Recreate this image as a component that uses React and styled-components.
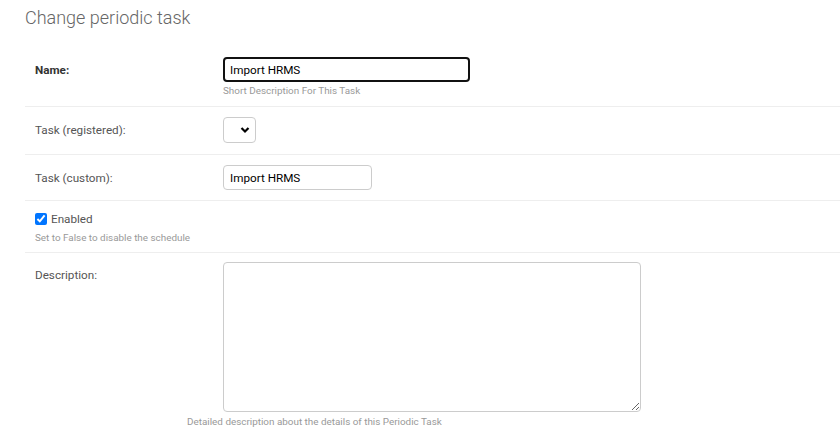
import React from "react";
import styled, { createGlobalStyle } from "styled-components";

const GlobalStyle = createGlobalStyle`
  body {
    margin: 0;
    background: #fff;
    font-family: Roboto, "Liberation Sans", sans-serif;
    font-size: 11.7px;
    color: #333;
  }
`;

const Page = styled.div`
  padding: 7px 0 0 25px;
`;

const Title = styled.h1`
  margin: 0 0 18px 0;
  font-size: 18px;
  font-weight: 300;
  line-height: 22px;
  color: #666;
`;

const Row = styled.div`
  padding: ${(p) => p.$pad || "10px 10px 10px 10px"};
  border-bottom: ${(p) => (p.$last ? "none" : "1px solid #eee")};
`;

const Line = styled.div`
  display: flex;
  align-items: ${(p) => (p.$top ? "flex-start" : "center")};
`;

const Label = styled.label`
  width: 188px;
  flex: none;
  font-weight: ${(p) => (p.$required ? "bold" : "normal")};
  color: ${(p) => (p.$required ? "#333" : "#555")};
  padding-top: ${(p) => (p.$top ? "6px" : "0")};
`;

const TextInput = styled.input`
  box-sizing: border-box;
  width: ${(p) => p.$w}px;
  height: 25px;
  margin: 0;
  font-family: Roboto, "Liberation Sans", sans-serif;
  font-size: 11.7px;
  color: #000;
  border: ${(p) => (p.$focus ? "2px solid #111" : "1px solid #ccc")};
  border-radius: 4px;
  padding: 0 0 0 ${(p) => (p.$focus ? "5px" : "6px")};
  outline: none;
`;

const SelectBox = styled.div`
  box-sizing: border-box;
  width: 33px;
  height: 26px;
  border: 1px solid #ccc;
  border-radius: 4px;
  display: flex;
  align-items: center;
  justify-content: flex-end;
  padding-right: 5px;
`;

const Help = styled.div`
  font-size: 9.9px;
  line-height: 12px;
  color: #999;
  margin-top: ${(p) => p.$gap || 3}px;
  padding-left: ${(p) => p.$indent || 0}px;
`;

const CheckLine = styled.label`
  display: flex;
  align-items: center;
  gap: 4px;
  line-height: 16px;
  color: #555;
`;

const Check = styled.input`
  margin: 0;
  width: 12px;
  height: 12px;
`;

const Area = styled.textarea`
  box-sizing: border-box;
  width: 418px;
  height: 150px;
  margin: 0;
  border: 1px solid #ccc;
  border-radius: 4px;
  font-family: Roboto, "Liberation Sans", sans-serif;
  font-size: 11.7px;
  outline: none;
  display: block;
`;

export default function App() {
  return (
    <Page>
      <GlobalStyle />
      <Title>Change periodic task</Title>

      <Row $pad="10px 10px 9px 10px">
        <Line>
          <Label $required>Name:</Label>
          <TextInput $w={247} $focus defaultValue="Import HRMS" />
        </Line>
        <Help $indent={188}>Short Description For This Task</Help>
      </Row>

      <Row $pad="10px 10px 11px 10px">
        <Line>
          <Label>Task (registered):</Label>
          <SelectBox>
            <svg width="10" height="10" viewBox="0 0 10 10">
              <path d="M1.5 3 L5 6.5 L8.5 3" fill="none" stroke="#000" strokeWidth="2.2" />
            </svg>
          </SelectBox>
        </Line>
      </Row>

      <Row>
        <Line>
          <Label>Task (custom):</Label>
          <TextInput $w={149} defaultValue="Import HRMS" />
        </Line>
      </Row>

      <Row $pad="10px 10px 8px 10px">
        <CheckLine>
          <Check type="checkbox" defaultChecked />
          Enabled
        </CheckLine>
        <Help $gap={5}>Set to False to disable the schedule</Help>
      </Row>

      <Row $last $pad="9px 10px 10px 10px">
        <Line $top>
          <Label $top>Description:</Label>
          <Area />
        </Line>
        <Help $indent={152} $gap={4}>
          Detailed description about the details of this Periodic Task
        </Help>
      </Row>
    </Page>
  );
}
